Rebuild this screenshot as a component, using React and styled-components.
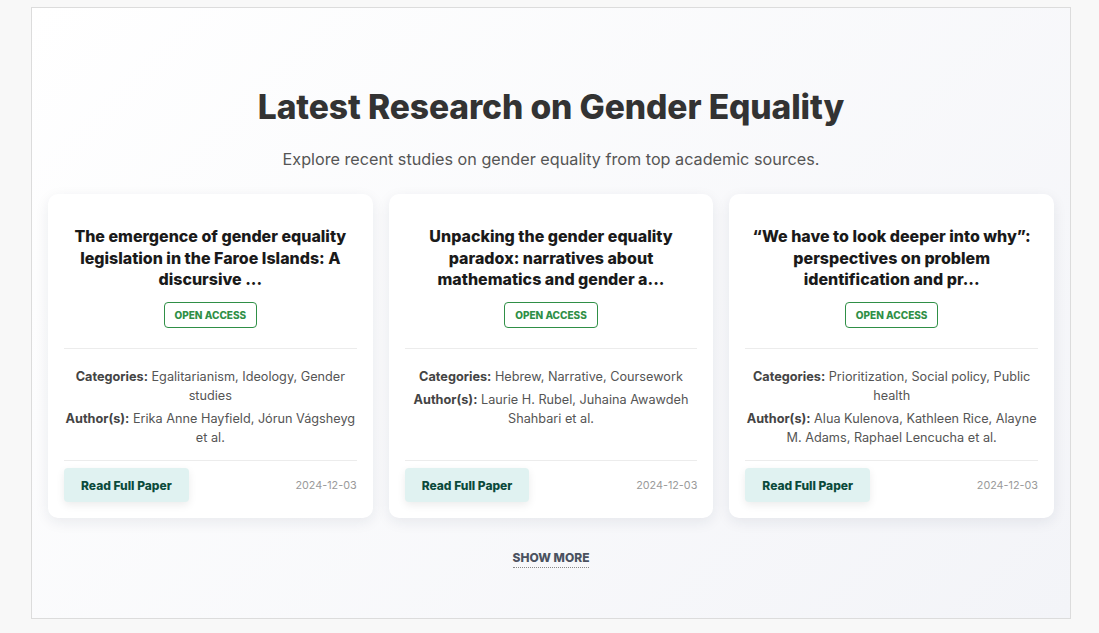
import React from "react";
import styled, { createGlobalStyle } from "styled-components";

const GlobalStyle = createGlobalStyle`
  html, body { margin: 0; padding: 0; background: #f8f8f8; }
  body { font-family: "Inter", "Noto Sans", sans-serif; }
  * { box-sizing: border-box; }
`;

const Page = styled.div`
  padding: 7px 28px 14px 31px;
`;

const Section = styled.section`
  width: 1040px;
  border: 1px solid #dcdcdc;
  background: linear-gradient(135deg, #ffffff 0%, #f3f4f8 100%);
  padding: 76px 16px 50px;
  display: flex;
  flex-direction: column;
  align-items: center;
`;

const Heading = styled.h2`
  margin: 0;
  font-family: "Inter", sans-serif;
  font-size: 33.6px;
  font-weight: 800;
  letter-spacing: -0.1px;
  color: #333333;
  line-height: 46px;
`;

const Subtitle = styled.p`
  margin: 18px 0 0;
  font-size: 16.2px;
  color: #555555;
  line-height: 22px;
`;

const Grid = styled.div`
  margin-top: 24px;
  width: 100%;
  display: grid;
  grid-template-columns: repeat(3, 1fr);
  gap: 16px;
`;

const Card = styled.article`
  background: #ffffff;
  border-radius: 10px;
  box-shadow: 0 4px 14px rgba(30, 40, 70, 0.08);
  padding: 32px 16px 16px;
  display: flex;
  flex-direction: column;
  text-align: center;
`;

const Title = styled.h3`
  margin: 0;
  font-size: 16px;
  font-weight: 800;
  line-height: 21.5px;
  color: #1a1a1a;
  height: 64px;
  padding: 0 5px;
`;

const Badge = styled.span`
  align-self: center;
  margin-top: 12px;
  padding: 0 10px;
  height: 26px;
  display: inline-flex;
  align-items: center;
  border: 1px solid #2f8f46;
  border-radius: 4px;
  color: #2f8f46;
  font-size: 10px;
  font-weight: 800;
  text-transform: uppercase;
`;

const Divider = styled.hr`
  margin: ${(p) => (p.$flush ? "0" : "20px 0 0")};
  border: 0;
  border-top: 1px solid #ececec;
  width: 100%;
`;

const Meta = styled.div`
  padding: 18px 0 13px;
  font-size: 12.7px;
  line-height: 19px;
  color: #555555;
  min-height: 111px;
  display: flex;
  flex-direction: column;
  gap: 4px;
`;

const MetaLine = styled.p`
  margin: 0;
`;

const MetaLabel = styled.strong`
  color: #444444;
  font-weight: 700;
`;

const Footer = styled.div`
  display: flex;
  align-items: center;
  justify-content: space-between;
  padding-top: 7px;
`;

const ReadButton = styled.button`
  border: 0;
  background: #e0f2f1;
  color: #0b4a3b;
  font-family: inherit;
  font-size: 12px;
  font-weight: 800;
  height: 34px;
  padding: 0 17px;
  border-radius: 4px;
  box-shadow: 0 3px 8px rgba(0, 0, 0, 0.08);
  cursor: pointer;
`;

const DateText = styled.span`
  font-size: 10.8px;
  color: #9a9a9a;
`;

const ShowMore = styled.a`
  margin-top: 32px;
  font-size: 12px;
  font-weight: 800;
  color: #4b5260;
  text-transform: uppercase;
  text-decoration: none;
  border-bottom: 1px dotted #888;
  padding-bottom: 1px;
  line-height: 16px;
`;

const papers = [
  {
    title: "The emergence of gender equality legislation in the Faroe Islands: A discursive ...",
    categories: "Egalitarianism, Ideology, Gender studies",
    authors: "Erika Anne Hayfield, Jórun Vágsheyg et al.",
  },
  {
    title: "Unpacking the gender equality paradox: narratives about mathematics and gender a...",
    categories: "Hebrew, Narrative, Coursework",
    authors: "Laurie H. Rubel, Juhaina Awawdeh Shahbari et al.",
  },
  {
    title: "“We have to look deeper into why”: perspectives on problem identification and pr...",
    categories: "Prioritization, Social policy, Public health",
    authors: "Alua Kulenova, Kathleen Rice, Alayne M. Adams, Raphael Lencucha et al.",
  },
];

export default function App() {
  return (
    <>
      <GlobalStyle />
      <Page>
        <Section>
          <Heading>Latest Research on Gender Equality</Heading>
          <Subtitle>Explore recent studies on gender equality from top academic sources.</Subtitle>
          <Grid>
            {papers.map((p) => (
              <Card key={p.title}>
                <Title>{p.title}</Title>
                <Badge>Open Access</Badge>
                <Divider />
                <Meta>
                  <MetaLine>
                    <MetaLabel>Categories:</MetaLabel> {p.categories}
                  </MetaLine>
                  <MetaLine>
                    <MetaLabel>Author(s):</MetaLabel> {p.authors}
                  </MetaLine>
                </Meta>
                <Divider $flush />
                <Footer>
                  <ReadButton>Read Full Paper</ReadButton>
                  <DateText>2024-12-03</DateText>
                </Footer>
              </Card>
            ))}
          </Grid>
          <ShowMore href="#">Show More</ShowMore>
        </Section>
      </Page>
    </>
  );
}
